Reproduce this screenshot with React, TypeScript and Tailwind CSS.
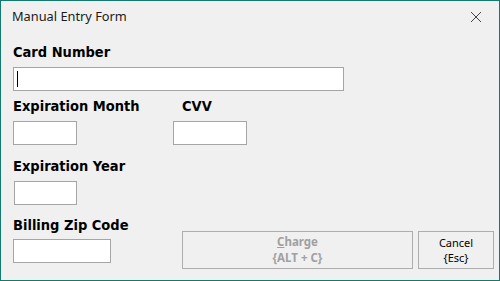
import React from 'react';

const label = "h-[17px] text-[14.5px] leading-[17px] font-bold text-black [font-family:'DejaVu_Sans_Condensed','DejaVu_Sans',sans-serif]";
const box = 'h-[24px] border border-[#a5a5a5] bg-white';

export default function App() {
  return (
    <div className="w-[500px] h-[281px] border border-[#137b6e] bg-[#f0f0f0] flex flex-col [font-family:'Noto_Sans',sans-serif]">
      {/* title bar */}
      <div className="h-[32px] flex items-center justify-between pl-[11px] pr-[17px]">
        <span className="text-[12.8px] text-[#1a1a1a]">Manual Entry Form</span>
        <svg width="12" height="12" viewBox="0 0 12 12" className="text-[#444]">
          <path d="M1 1L11 11M11 1L1 11" stroke="currentColor" strokeWidth="1" />
        </svg>
      </div>

      <div className="pl-[12px] flex flex-col">
        <div className={`mt-[11px] ${label}`}>Card Number</div>
        <div className={`mt-[6px] w-[331px] ${box} flex items-center pl-[3px]`}>
          <div className="w-px h-[16px] bg-black" />
        </div>

        <div className="mt-[7px] flex">
          <div className="w-[160px] flex flex-col">
            <div className={label}>Expiration Month</div>
            <div className={`mt-[6px] w-[64px] ${box}`} />
          </div>
          <div className="flex flex-col">
            <div className={`pl-[9px] ${label}`}>CVV</div>
            <div className={`mt-[6px] w-[74px] ${box}`} />
          </div>
        </div>

        <div className={`mt-[13px] ${label}`}>Expiration Year</div>
        <div className={`mt-[6px] ml-px w-[63px] ${box}`} />

        <div className="flex">
          <div className="w-[169px] flex flex-col">
            <div className={`mt-[12px] ${label}`}>Billing Zip Code</div>
            <div className={`mt-[5px] w-[98px] ${box}`} />
          </div>
          <div className="mt-[26px] flex gap-[5px]">
            <button className="w-[231px] h-[38px] border border-[#adadad] bg-[#f0f0f0] flex flex-col items-center justify-center text-[11.5px] leading-[16px] font-bold text-[#a0a0a0]">
              <span><span className="underline">C</span>harge</span>
              <span>{'{ALT + C}'}</span>
            </button>
            <button className="w-[76px] h-[38px] border border-[#adadad] bg-[#f0f0f0] flex flex-col items-center justify-center text-[11px] leading-[15px] text-black">
              <span>Cancel</span>
              <span>{'{Esc}'}</span>
            </button>
          </div>
        </div>
      </div>
    </div>
  );
}
